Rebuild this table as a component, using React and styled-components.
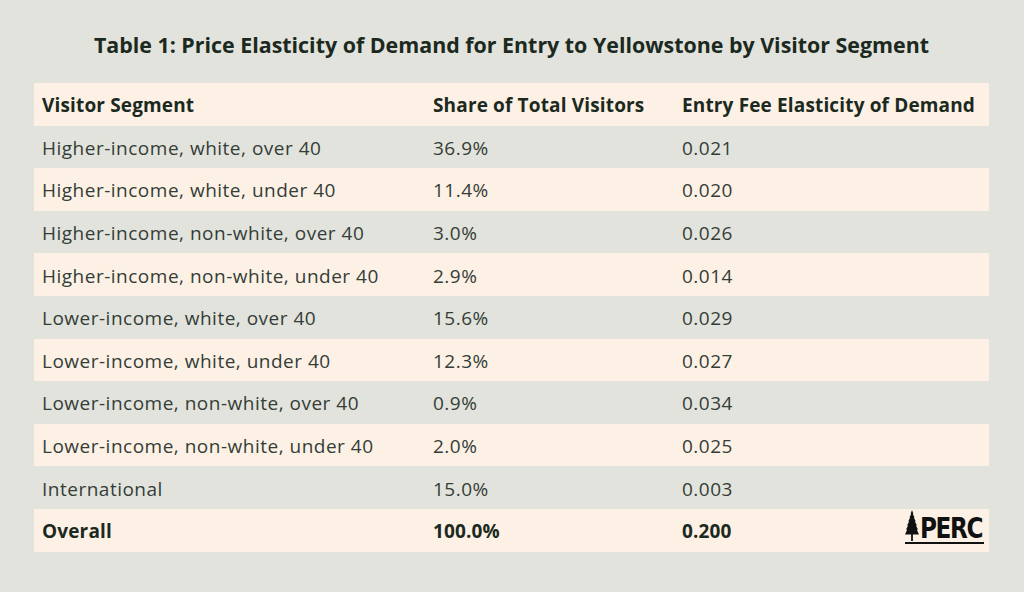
import React from 'react';
import styled, { createGlobalStyle } from 'styled-components';

const GlobalStyle = createGlobalStyle`
  html, body {
    margin: 0;
    padding: 0;
    background: #e2e3dc;
  }
`;

const rows = [
  { segment: 'Higher-income, white, over 40', share: '36.9%', elasticity: '0.021' },
  { segment: 'Higher-income, white, under 40', share: '11.4%', elasticity: '0.020' },
  { segment: 'Higher-income, non-white, over 40', share: '3.0%', elasticity: '0.026' },
  { segment: 'Higher-income, non-white, under 40', share: '2.9%', elasticity: '0.014' },
  { segment: 'Lower-income, white, over 40', share: '15.6%', elasticity: '0.029' },
  { segment: 'Lower-income, white, under 40', share: '12.3%', elasticity: '0.027' },
  { segment: 'Lower-income, non-white, over 40', share: '0.9%', elasticity: '0.034' },
  { segment: 'Lower-income, non-white, under 40', share: '2.0%', elasticity: '0.025' },
  { segment: 'International', share: '15.0%', elasticity: '0.003' },
];

function TreeIcon() {
  return (
    <svg width="14" height="31" viewBox="0 0 14 31">
      <path
        fill="#111"
        d="M7 0 L8.4 4 L7.8 4 L9.6 7.5 L8.8 7.5 L10.8 11.5 L9.8 11.5 L12 15.5 L10.9 15.5 L13 19.5 L11.8 19.5 L14 24.5 L7.9 24.5 L7.9 31 L6.1 31 L6.1 24.5 L0 24.5 L2.2 19.5 L1 19.5 L3.1 15.5 L2 15.5 L4.2 11.5 L3.2 11.5 L5.2 7.5 L4.4 7.5 L6.2 4 L5.6 4 Z"
      />
    </svg>
  );
}

function App() {
  return (
    <Page>
      <GlobalStyle />
      <Title>Table 1: Price Elasticity of Demand for Entry to Yellowstone by Visitor Segment</Title>
      <Table>
        <Row shaded bold>
          <Cell>Visitor Segment</Cell>
          <Cell>Share of Total Visitors</Cell>
          <Cell>Entry Fee Elasticity of Demand</Cell>
        </Row>
        {rows.map((r, i) => (
          <Row key={r.segment} shaded={i % 2 === 1}>
            <Cell>{r.segment}</Cell>
            <Cell>{r.share}</Cell>
            <Cell>{r.elasticity}</Cell>
          </Row>
        ))}
        <Row shaded bold>
          <Cell>Overall</Cell>
          <Cell>100.0%</Cell>
          <Cell>
            0.200
            <Logo>
              <TreeIcon />
              <LogoText>PERC</LogoText>
            </Logo>
          </Cell>
        </Row>
      </Table>
    </Page>
  );
}

const Page = styled.div`
  width: 1024px;
  height: 592px;
  box-sizing: border-box;
  padding: 30px 35px 0 34px;
  font-family: 'Open Sans', 'Liberation Sans', sans-serif;
`;

const Title = styled.h1`
  margin: 0 0 24px 0;
  text-align: center;
  font-size: 21.4px;
  line-height: 29px;
  font-weight: 700;
  color: #1b2920;
`;

const Table = styled.div`
  display: flex;
  flex-direction: column;
`;

const Row = styled.div`
  display: grid;
  grid-template-columns: 391px 249px 1fr;
  height: 42.6px;
  align-items: center;
  background: ${({ shaded }) => (shaded ? '#fdf1e6' : 'transparent')};
  font-weight: ${({ bold }) => (bold ? 700 : 400)};
  color: ${({ bold }) => (bold ? '#1b2920' : '#343d37')};
  letter-spacing: ${({ bold }) => (bold ? '0.15px' : '0.5px')};
  font-size: 19px;
`;

const Cell = styled.div`
  padding-left: 8px;
  padding-top: 2px;
  display: flex;
  align-items: center;
  position: relative;
`;

const Logo = styled.div`
  position: absolute;
  right: 5px;
  top: -6px;
  display: flex;
  align-items: flex-end;
  gap: 1px;
  border-bottom: 2px solid #111;
  padding-bottom: 1px;
  letter-spacing: 0;
`;

const LogoText = styled.span`
  font-family: 'DejaVu Sans Condensed', 'Liberation Sans', sans-serif;
  font-stretch: condensed;
  font-weight: 700;
  font-size: 28px;
  line-height: 25px;
  letter-spacing: -1.5px;
  color: #111;
  display: inline-block;
  transform: scaleX(0.92);
  transform-origin: left bottom;
  margin-right: -4px;
`;

export default App;
